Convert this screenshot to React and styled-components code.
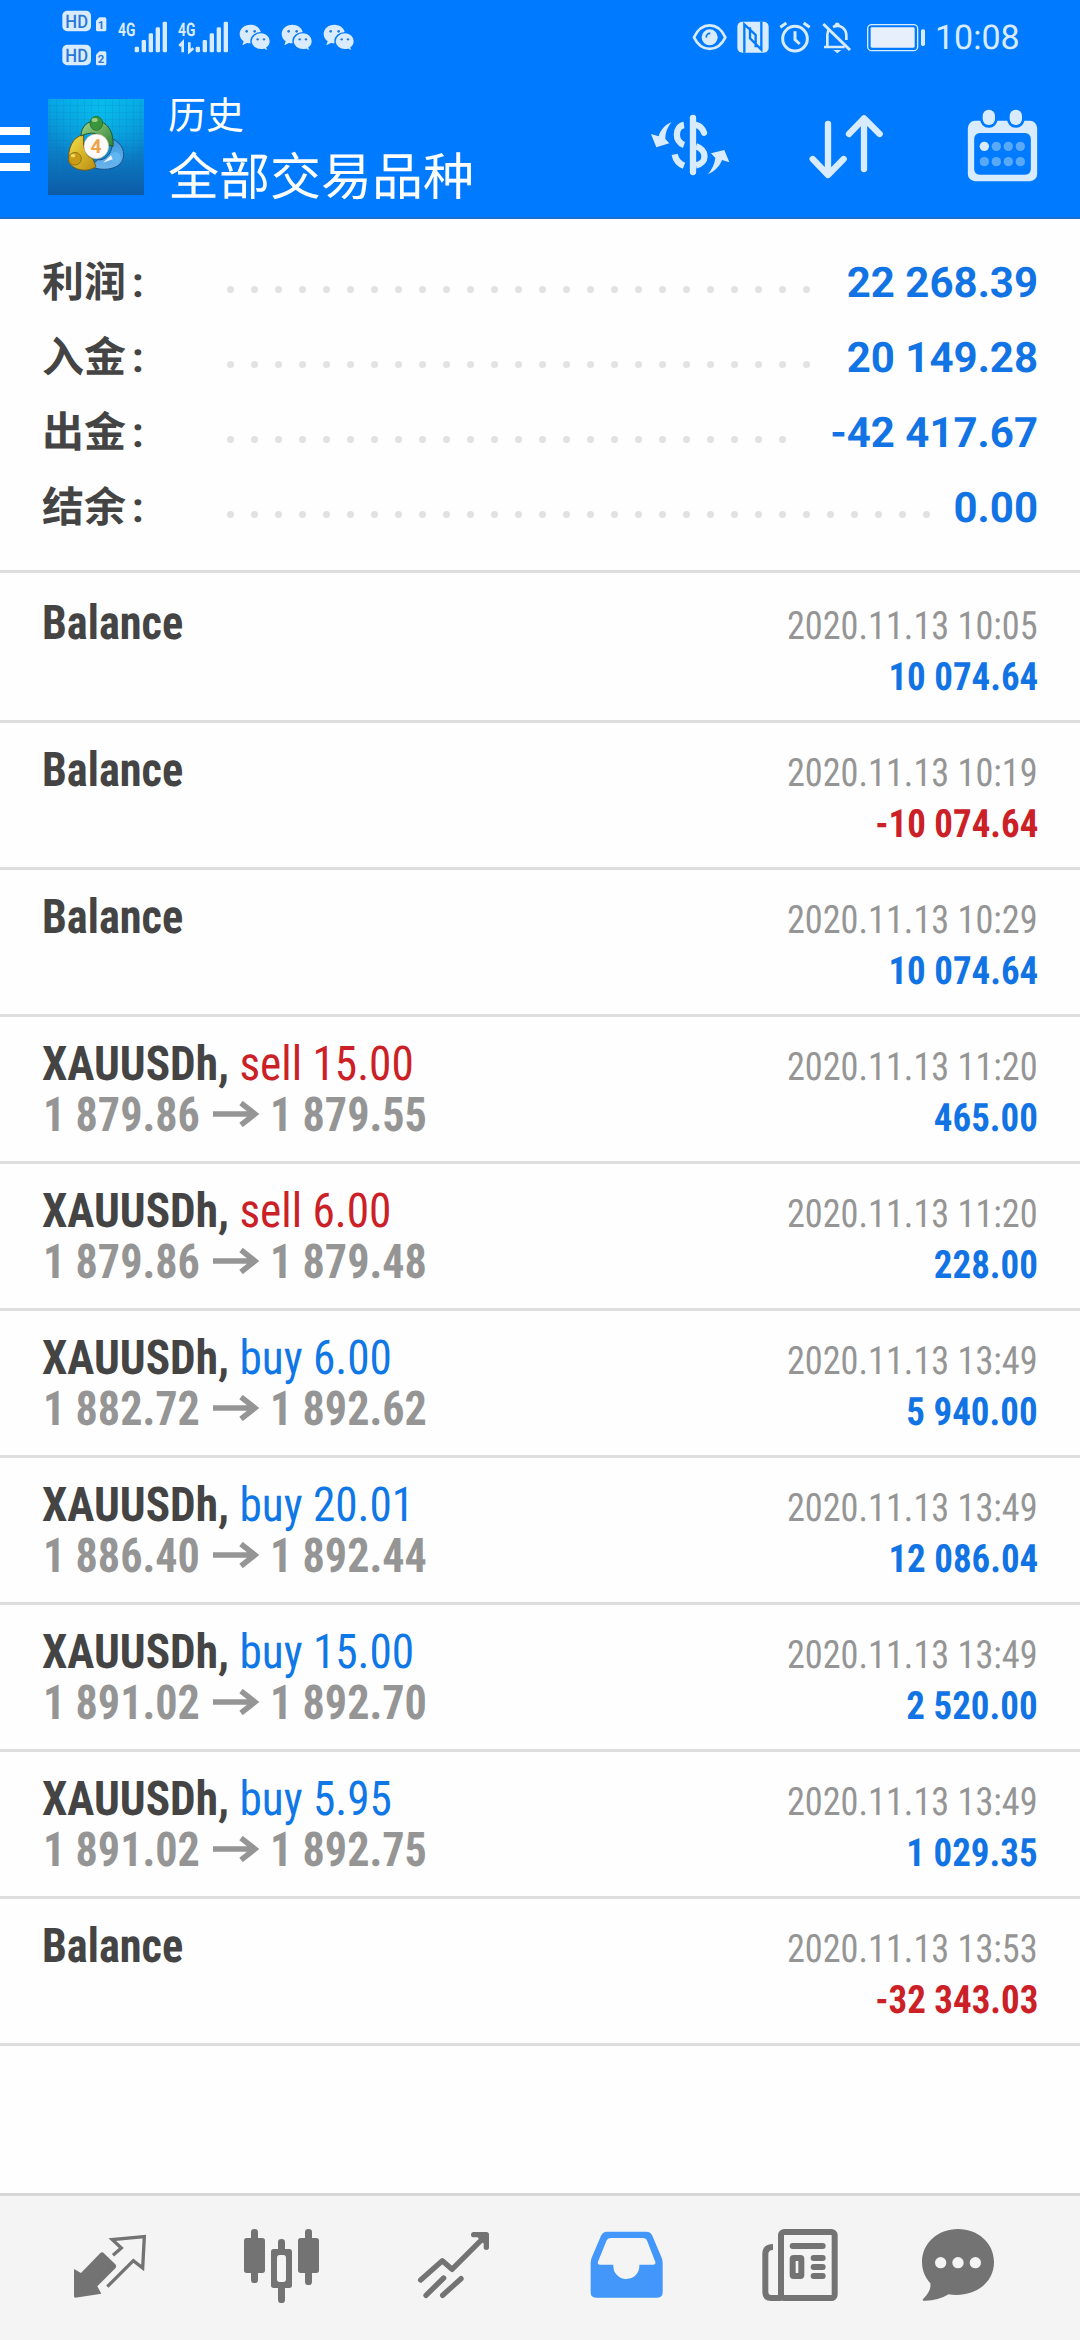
import React from "react";
import styled, { createGlobalStyle } from "styled-components";

const BLUE = "#007aff";
const ICON = "#d9ebff";
const GREY = "#737373";

const totals = [
  { label: "利润", value: "22 268.39" },
  { label: "入金", value: "20 149.28" },
  { label: "出金", value: "-42 417.67" },
  { label: "结余", value: "0.00" },
];

const deals = [
  { time: "2020.11.13 10:05", profit: "10 074.64" },
  { time: "2020.11.13 10:19", profit: "-10 074.64" },
  { time: "2020.11.13 10:29", profit: "10 074.64" },
  { symbol: "XAUUSDh", side: "sell", lots: "15.00", open: "1 879.86", close: "1 879.55", time: "2020.11.13 11:20", profit: "465.00" },
  { symbol: "XAUUSDh", side: "sell", lots: "6.00", open: "1 879.86", close: "1 879.48", time: "2020.11.13 11:20", profit: "228.00" },
  { symbol: "XAUUSDh", side: "buy", lots: "6.00", open: "1 882.72", close: "1 892.62", time: "2020.11.13 13:49", profit: "5 940.00" },
  { symbol: "XAUUSDh", side: "buy", lots: "20.01", open: "1 886.40", close: "1 892.44", time: "2020.11.13 13:49", profit: "12 086.04" },
  { symbol: "XAUUSDh", side: "buy", lots: "15.00", open: "1 891.02", close: "1 892.70", time: "2020.11.13 13:49", profit: "2 520.00" },
  { symbol: "XAUUSDh", side: "buy", lots: "5.95", open: "1 891.02", close: "1 892.75", time: "2020.11.13 13:49", profit: "1 029.35" },
  { time: "2020.11.13 13:53", profit: "-32 343.03" },
];

/* every icon is drawn on a grid 3 times finer than the screen */
const Art = ({ x, y, w, h, children }) => (
  <Svg width={w / 3} height={h / 3} viewBox={`${x} ${y} ${w} ${h}`}>
    {children}
  </Svg>
);

const HdBadges = () => (
  <Art x={180} y={0} w={150} h={216}>
    {[0, 102].map((dy, i) => (
      <g key={dy} transform={`translate(0 ${dy})`}>
        <rect x="187" y="32" width="86" height="62" rx="15" fill={ICON} />
        <text x="230" y="83" textAnchor="middle" fontSize="56" fontFamily="Roboto" fontWeight="500" textLength="68" lengthAdjust="spacingAndGlyphs" fill="#2878d8">HD</text>
        <path d="M298 52h16a5 5 0 0 1 5 5v32a5 5 0 0 1-5 5h-21a5 5 0 0 1-5-5V62z" fill={ICON} />
        <text x="303" y="87" textAnchor="middle" fontSize="34" fontFamily="Roboto" fontWeight="700" fill="#2878d8">{i + 1}</text>
      </g>
    ))}
  </Art>
);

const Signal = ({ x, w, data }) => (
  <Art x={x} y={0} w={w} h={216}>
    <text x={x + 6} y="107" fontSize="56" fontFamily="Roboto" fontWeight="700" textLength="52" lengthAdjust="spacingAndGlyphs" fill={ICON}>4G</text>
    {[140, 120, 100, 82, 65].map((top, i) => (
      <rect key={top} x={x + (data ? 59 : 56) + i * 21} y={top} width="13" height={157 - top} rx="4" fill={ICON} />
    ))}
    {data && <path d="M538 138l10-11v30M568 127v28l12-10" fill="none" stroke={ICON} strokeWidth="8" />}
  </Art>
);

const WeChat = () => (
  <Art x={714} y={0} w={108} h={216}>
    <path d="M751 74c-18 0-32 12-32 28 0 9 5 17 12 22l-4 12 14-7c3 1 7 1 10 1 18 0 32-12 32-28s-14-28-32-28z" fill={ICON} />
    <path d="M783 98c-16 0-30 11-30 26 0 14 14 25 30 25 3 0 6 0 9-1l13 6-4-11c6-4 10-11 10-19 0-15-13-26-28-26z" fill={ICON} stroke={BLUE} strokeWidth="4" />
    <circle cx="740" cy="94" r="4" fill="#2878d8" />
    <circle cx="764" cy="94" r="4" fill="#2878d8" />
    <circle cx="773" cy="118" r="3.5" fill="#2878d8" />
    <circle cx="792" cy="118" r="3.5" fill="#2878d8" />
  </Art>
);

const Eye = () => (
  <Art x={210} y={0} w={126} h={216}>
    <path d="M222 112c22-48 72-48 94 0-22 46-72 46-94 0z" fill="none" stroke={ICON} strokeWidth="8" />
    <circle cx="269" cy="112" r="24" fill={ICON} />
    <path d="M259 113a11 11 0 0 1 12-13" fill="none" stroke={BLUE} strokeWidth="5" />
  </Art>
);

const Nfc = () => (
  <Art x={336} y={0} w={126} h={216}>
    <rect x="352" y="65" width="94" height="93" rx="15" fill={ICON} />
    <path d="M373 158V73l34 32v37M424 65v84l-34-34V82" fill="none" stroke={BLUE} strokeWidth="7" />
  </Art>
);

const Alarm = () => (
  <Art x={462} y={0} w={129} h={216}>
    <circle cx="525" cy="116" r="37" fill="none" stroke={ICON} strokeWidth="9" />
    <path d="M525 94v25l14 13M481 82l18-13M569 82l-18-13" fill="none" stroke={ICON} strokeWidth="9" />
  </Art>
);

const Muted = () => (
  <Art x={591} y={0} w={129} h={216}>
    <path d="M612 141h62M622 139v-34c0-9 3-14 6-18M639 81c22-10 39 5 40 24v15" fill="none" stroke={ICON} strokeWidth="8" />
    <path d="M644 80v-8a8 7 0 0 1 15 0v8" fill={ICON} />
    <path d="M610 72l80 78" stroke={ICON} strokeWidth="9" />
    <path d="M640 150h24l-12 10z" fill={ICON} />
  </Art>
);

const Battery = () => (
  <Art x={720} y={0} w={210} h={216}>
    <rect x="743" y="74" width="150" height="78" rx="12" fill="none" stroke={ICON} strokeWidth="4" />
    <rect x="752" y="82" width="132" height="61" rx="4" fill="#e8effc" />
    <rect x="903" y="88" width="12" height="50" rx="5" fill={ICON} />
  </Art>
);

const Burger = () => (
  <Art x={0} y={216} w={144} h={438}>
    {[381, 435, 489].map((y) => (
      <rect key={y} x="0" y={y} width="90" height="24" fill="#fff" />
    ))}
  </Art>
);

const Logo = () => (
  <Art x={144} y={216} w={288} h={438}>
    <defs>
      <linearGradient id="tile" x1="0" y1="0" x2="0" y2="1">
        <stop offset="0" stopColor="#06a5e6" />
        <stop offset="0.5" stopColor="#0a83cb" />
        <stop offset="1" stopColor="#0d5ba6" />
      </linearGradient>
      <radialGradient id="glow" cx="0.55" cy="0.12" r="0.6">
        <stop offset="0" stopColor="#08c3ee" stopOpacity="0.8" />
        <stop offset="1" stopColor="#08c3ee" stopOpacity="0" />
      </radialGradient>
      <linearGradient id="gold" x1="0" y1="0" x2="1" y2="1">
        <stop offset="0" stopColor="#f6e04a" />
        <stop offset="1" stopColor="#b98c10" />
      </linearGradient>
      <linearGradient id="leaf" x1="0" y1="0" x2="1" y2="1">
        <stop offset="0" stopColor="#a8d88c" />
        <stop offset="1" stopColor="#2b8136" />
      </linearGradient>
      <linearGradient id="sea" x1="0" y1="0" x2="0" y2="1">
        <stop offset="0" stopColor="#3f98e0" />
        <stop offset="1" stopColor="#6bb4ec" />
      </linearGradient>
      <pattern id="grid" width="21" height="21" patternUnits="userSpaceOnUse">
        <path d="M0 0H21M0 0V21" stroke="#0b5f9e" strokeOpacity="0.35" strokeWidth="2" />
      </pattern>
    </defs>
    <rect x="144" y="297" width="288" height="288" fill="url(#tile)" />
    <rect x="144" y="297" width="288" height="288" fill="url(#glow)" />
    <rect x="144" y="297" width="288" height="288" fill="url(#grid)" />
    <path d="M337 416c30 14 42 42 29 68-12 24-62 32-93 15l20-20c26 4 48-24 44-63z" fill="url(#sea)" stroke="#1b4f8a" strokeWidth="3" />
    <path d="M251 404c-34 6-48 42-45 82 20 30 60 30 82 14l-10-24c-26-10-30-40-27-72z" fill="url(#gold)" stroke="#6e5a12" strokeWidth="3" />
    <path d="M243 408c0-28 20-46 46-46 32 2 54 34 50 78l-20-8c-8-30-42-42-76-24z" fill="url(#leaf)" stroke="#1e5a2a" strokeWidth="3" />
    <ellipse cx="289" cy="370" rx="19" ry="21" fill="#39963c" stroke="#1c5e26" strokeWidth="2" />
    <ellipse cx="284" cy="360" rx="9" ry="6" fill="#9ccf85" />
    <circle cx="225" cy="476" r="19" fill="#c99c17" stroke="#7c600f" strokeWidth="2" />
    <ellipse cx="219" cy="467" rx="7" ry="5" fill="#f2da6a" />
    <circle cx="346" cy="472" r="16" fill="#62b6ef" />
    <path d="M309 488l24-22 5 12z" fill="#eef6fd" />
    <circle cx="289" cy="439" r="37" fill="#fdfcfa" stroke="#c9b69a" strokeWidth="2" />
    <text x="288" y="460" textAnchor="middle" fontSize="58" fontFamily="Roboto" fontWeight="700" fill="#f0a24a">4</text>
  </Art>
);

const Currency = () => (
  <Art x={60} y={216} w={300} h={438}>
    <path d="M219 354v162" stroke={ICON} strokeWidth="19" strokeLinecap="round" />
    <path d="M192 375c-27 4-30 50 0 60M164 463c3 16 12 28 28 34" fill="none" stroke={ICON} strokeWidth="19" />
    <path d="M229 375c12 3 19 10 23 23" fill="none" stroke={ICON} strokeWidth="19" strokeLinecap="round" />
    <path d="M228 439c34 12 34 50 0 57" fill="none" stroke={ICON} strokeWidth="19" />
    <path d="M155 367c-15 4-33 20-39 42l-23-7 16 40 39-12-12-13c0-20 8-38 19-50z" fill={ICON} />
    <path d="M264 523c20-10 34-22 42-43l22 7-15-37-40 10 13 14c-2 18-10 34-22 49z" fill={ICON} />
  </Art>
);

const Sort = () => (
  <Art x={540} y={216} w={300} h={438}>
    <g fill="none" stroke={ICON} strokeWidth="19" strokeLinecap="round" strokeLinejoin="round">
      <path d="M624 372v152M578 477l46 48 47-48" />
      <path d="M732 507V355M687 402l45-47 47 47" />
    </g>
  </Art>
);

const Calendar = () => (
  <Art x={1020} y={216} w={270} h={438}>
    <rect x="1053" y="372" width="189" height="162" rx="12" fill="none" stroke={ICON} strokeWidth="19" />
    <path d="M1062 399v18a18 18 0 0 1 18-18zM1233 399v18a18 18 0 0 0-18-18zM1062 381h171v18h-171zM1062 525v-18a18 18 0 0 0 18 18zM1233 525v-18a18 18 0 0 1-18 18z" fill={ICON} />
    {[1088, 1169].map((x) => (
      <rect key={x} x={x} y="329" width="37" height="46" rx="18" fill={ICON} stroke={BLUE} strokeWidth="16" paintOrder="stroke" />
    ))}
    {[439, 485].map((y) =>
      [1093, 1129, 1165, 1201].map((x) => (
        <circle key={x + y} cx={x} cy={y} r="14" fill={x === 1093 && y === 439 ? ICON : "#5aa9f8"} />
      ))
    )}
  </Art>
);

const Quotes = () => (
  <Art x={69} y={48} w={519} h={432}>
    <path d="M311 219l35 34q5 6 0 12l-54 54 12 22-78 12q-4 0-4-4v-82l21 12 56-58q7-7 12-2z" fill={GREY} />
    <path d="M339 226l25-22-27-25 96-9-5 94-28-22-78 78" fill="none" stroke={GREY} strokeWidth="10" />
  </Art>
);

const Candles = () => (
  <Art x={588} y={48} w={519} h={432}>
    <g fill={GREY}>
      <rect x="753" y="147" width="21" height="162" rx="10" />
      <rect x="732" y="174" width="63" height="105" rx="8" />
      <rect x="834" y="177" width="21" height="192" rx="10" />
      <rect x="813" y="207" width="63" height="117" rx="8" />
      <rect x="831" y="225" width="27" height="81" rx="8" fill="#f4f4f4" />
      <rect x="915" y="147" width="21" height="168" rx="10" />
      <rect x="894" y="174" width="63" height="105" rx="8" />
    </g>
  </Art>
);

const Trend = () => (
  <Art x={27} y={48} w={519} h={432}>
    <g fill="none" stroke={GREY} strokeWidth="16" strokeLinecap="round" strokeLinejoin="round">
      <path d="M182 300l65-58 29 26 96-96M198 346l53-52M248 346l55-50" />
      <path d="M341 164h38v38" />
      <path d="M360 168l15 15" />
    </g>
  </Art>
);

const Inbox = () => (
  <Art x={546} y={48} w={519} h={432}>
    <path fillRule="evenodd" d="M741 155h118q12 0 17 10l29 68q3 8 3 16v88q0 16-16 16H708q-16 0-16-16v-88q0-8 3-16l28-66q6-12 18-12zM753 174q-10 0-14 9l-25 62q-3 9 6 9h40a38 38 0 0 0 78 8v-8h41q9 0 7-8l-24-62q-4-10-14-10z" fill="#4397fb" />
  </Art>
);

const News = () => (
  <Art x={-15} y={48} w={519} h={432}>
    <g fill="none" stroke={GREY} strokeWidth="18">
      <rect x="183" y="156" width="161" height="198" rx="10" />
      <path d="M159 201q-23 0-23 22v113q0 18 18 18h30" />
      <path d="M218 198h90M281 234h27M281 261h27M281 288h27" strokeLinecap="round" />
      <rect x="218" y="234" width="26" height="54" rx="3" />
    </g>
  </Art>
);

const Chat = () => (
  <Art x={504} y={48} w={519} h={432}>
    <path d="M714 147c60 0 108 42 108 99 0 66-62 108-136 97-22 13-48 20-75 19-4 0-4-3-1-6 16-16 23-28 21-46-16-18-25-40-25-64 0-57 48-99 108-99z" fill={GREY} />
    {[662, 714, 766].map((x) => (
      <circle key={x} cx={x} cy="248" r="17" fill="#f4f4f4" />
    ))}
  </Art>
);

const Arrow = () => (
  <ArrowSvg width="46" height="26" viewBox="0 0 46 26">
    <path d="M0 13h42M28 2l14 11-14 11" fill="none" stroke="#959595" strokeWidth="5.5" />
  </ArrowSvg>
);

const Deal = ({ deal }) => (
  <Row>
    <Line>
      {deal.symbol ? (
        <Symbol $squeeze={0.943}>
          {deal.symbol}, <Side $side={deal.side}>{deal.side} {deal.lots}</Side>
        </Symbol>
      ) : (
        <Symbol $squeeze={0.923}>Balance</Symbol>
      )}
      <Time>{deal.time}</Time>
    </Line>
    <Line>
      {deal.open && (
        <Prices>
          <Price>{deal.open}</Price>
          <Arrow />
          <Price>{deal.close}</Price>
        </Prices>
      )}
      <Profit $loss={deal.profit.startsWith("-")}>{deal.profit}</Profit>
    </Line>
  </Row>
);

const App = () => {
  return (
    <Screen>
      <GlobalStyle />
      <StatusBar>
        <StatusIcons>
          <HdBadges />
          <Signal x={348} w={162} />
          <Signal x={528} w={168} data />
          <WeChat />
          <WeChat />
          <WeChat />
        </StatusIcons>
        <Eye />
        <Nfc />
        <Alarm />
        <Muted />
        <Battery />
        <Clock>10:08</Clock>
      </StatusBar>
      <Toolbar>
        <Burger />
        <Logo />
        <Titles>
          <Caption>历史</Caption>
          <Title>全部交易品种</Title>
        </Titles>
        <Actions>
          <Currency />
          <Sort />
          <Calendar />
        </Actions>
      </Toolbar>
      <Summary>
        {totals.map((t) => (
          <Total key={t.label}>
            <Label>{t.label}<Colon>:</Colon></Label>
            <Leader>
              {Array(36).fill().map((_, i) => <Dot key={i} />)}
            </Leader>
            <Amount>{t.value}</Amount>
          </Total>
        ))}
      </Summary>
      <List>
        {deals.map((d, i) => <Deal key={i} deal={d} />)}
      </List>
      <TabBar>
        <Quotes />
        <Candles />
        <Trend />
        <Inbox />
        <News />
        <Chat />
      </TabBar>
    </Screen>
  );
};

export default App;

const GlobalStyle = createGlobalStyle`
  body {
    margin: 0;
    background: #fefefe;
  }
`;

const Svg = styled.svg`
  display: block;
  flex: none;
`;

const Screen = styled.div`
  display: flex;
  flex-direction: column;
  width: 1080px;
  height: 2340px;
  overflow: hidden;
  background: #fefefe;
  font-family: Roboto, "Noto Sans CJK SC", sans-serif;
  text-rendering: geometricPrecision;
`;

const StatusBar = styled.div`
  display: flex;
  flex: none;
  height: 72px;
  background: ${BLUE};
`;

const StatusIcons = styled.div`
  display: flex;
  flex: 1;
  gap: 6px;
  padding-left: 60px;
`;

const Clock = styled.div`
  box-sizing: border-box;
  width: 150px;
  padding-left: 5px;
  font-size: 34px;
  line-height: 76px;
  color: ${ICON};
`;

const Toolbar = styled.div`
  display: flex;
  flex: none;
  height: 145px;
  background: ${BLUE};
  border-bottom: 2px solid #1a70d2;
`;

const Titles = styled.div`
  flex: 1;
  padding: 21px 0 0 24px;
  color: #fff;
`;

const Caption = styled.div`
  font-size: 38px;
  line-height: 48px;
`;

const Title = styled.div`
  font-size: 51px;
  line-height: 76px;
`;

const Actions = styled.div`
  display: flex;
  gap: 60px;
  padding-right: 30px;
`;

const Summary = styled.div`
  box-sizing: border-box;
  flex: none;
  height: 354px;
  padding: 27px 42px 0;
  border-bottom: 3px solid #dedede;
`;

const Total = styled.div`
  display: flex;
  height: 75px;
  line-height: 75px;
  font-size: 42px;
  font-weight: 700;
`;

const Label = styled.div`
  width: 176px;
  color: #444;
`;

const Colon = styled.span`
  margin-left: 6px;
`;

const Leader = styled.div`
  display: flex;
  flex: 1;
  flex-wrap: wrap;
  height: 8px;
  margin: 40px 15px 0 0;
  overflow: hidden;
`;

const Dot = styled.i`
  width: 7px;
  height: 7px;
  margin: 0 8.5px 1px;
  border-radius: 50%;
  background: #e2e2e2;
`;

const Amount = styled.div`
  color: #1274e4;
`;

const List = styled.div`
  flex: 1;
`;

const Row = styled.div`
  box-sizing: border-box;
  height: 147px;
  padding-top: 24px;

  & + & {
    padding-top: 21px;
    border-top: 3px solid #dedede;
  }

  &:last-child {
    height: 150px;
    border-bottom: 3px solid #dedede;
  }
`;

const Line = styled.div`
  display: flex;
  align-items: baseline;
  height: 51px;
  padding: 0 42px;
  line-height: 51px;
  font-stretch: 75%;

  /* keeps the baseline when there is nothing on the left */
  &::before {
    content: "\\200b";
    width: 0;
    font-size: 48px;
  }
`;

const Symbol = styled.div`
  font-size: 48px;
  font-weight: 700;
  color: #444;
  white-space: pre;
  transform: scaleX(${({ $squeeze }) => $squeeze});
  transform-origin: left;
`;

const Side = styled.span`
  font-weight: 400;
  color: ${({ $side }) => ($side === "sell" ? "#cc2027" : "#0f77e6")};
`;

const Prices = styled.div`
  padding-left: 1px;
  font-size: 48px;
  font-weight: 700;
  color: #959595;
`;

const Price = styled.span`
  display: inline-block;
  margin-right: -14px;
  transform: scaleX(0.92);
  transform-origin: left;
`;

const ArrowSvg = styled.svg`
  margin: 0 11px 4px 13px;
`;

const Time = styled.div`
  margin-left: auto;
  font-size: 39px;
  color: #959595;
  transform: scaleX(0.93);
  transform-origin: right;
`;

const Profit = styled.div`
  margin-left: auto;
  font-size: 39px;
  font-weight: 700;
  color: ${({ $loss }) => ($loss ? "#cc2027" : "#1274e4")};
  transform: scaleX(0.947);
  transform-origin: right;
`;

const TabBar = styled.div`
  display: flex;
  flex: none;
  height: 144px;
  padding-left: 23px;
  background: #f4f4f4;
  border-top: 3px solid #d6d6d6;
`;
